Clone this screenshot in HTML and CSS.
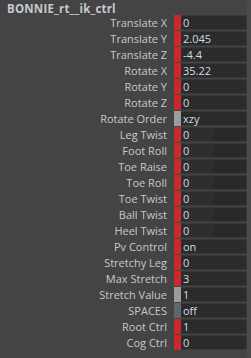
FILE: index.html
```html
<!DOCTYPE html>
<html>
<head>
<meta charset="utf-8">
<link rel="stylesheet" href="styles.css">
</head>
<body>
<div class="panel">
  <div class="main">
    <div class="title">BONNIE_rt__ik_ctrl</div>
    <div class="rows">
      <div class="row"><span class="label">Translate X</span><span class="mark red"></span><span class="field">0</span></div>
      <div class="row"><span class="label">Translate Y</span><span class="mark red"></span><span class="field">2.045</span></div>
      <div class="row"><span class="label">Translate Z</span><span class="mark red"></span><span class="field">-4.4</span></div>
      <div class="row"><span class="label">Rotate X</span><span class="mark red"></span><span class="field">35.22</span></div>
      <div class="row"><span class="label">Rotate Y</span><span class="mark red"></span><span class="field">0</span></div>
      <div class="row"><span class="label">Rotate Z</span><span class="mark red"></span><span class="field">0</span></div>
      <div class="row"><span class="label">Rotate Order</span><span class="mark gray"></span><span class="field plain">xzy</span></div>
      <div class="row"><span class="label">Leg Twist</span><span class="mark red"></span><span class="field split"><span class="num">0</span><span class="slide"></span></span></div>
      <div class="row"><span class="label">Foot Roll</span><span class="mark red"></span><span class="field split"><span class="num">0</span><span class="slide"></span></span></div>
      <div class="row"><span class="label">Toe Raise</span><span class="mark red"></span><span class="field split"><span class="num">0</span><span class="slide"></span></span></div>
      <div class="row"><span class="label">Toe Roll</span><span class="mark red"></span><span class="field split"><span class="num">0</span><span class="slide"></span></span></div>
      <div class="row"><span class="label">Toe Twist</span><span class="mark red"></span><span class="field split"><span class="num">0</span><span class="slide"></span></span></div>
      <div class="row"><span class="label">Ball Twist</span><span class="mark red"></span><span class="field split"><span class="num">0</span><span class="slide"></span></span></div>
      <div class="row"><span class="label">Heel Twist</span><span class="mark red"></span><span class="field split"><span class="num">0</span><span class="slide"></span></span></div>
      <div class="row"><span class="label">Pv Control</span><span class="mark red"></span><span class="field">on</span></div>
      <div class="row"><span class="label">Stretchy Leg</span><span class="mark red"></span><span class="field">0</span></div>
      <div class="row"><span class="label">Max Stretch</span><span class="mark red"></span><span class="field">3</span></div>
      <div class="row"><span class="label">Stretch Value</span><span class="mark gray"></span><span class="field">1</span></div>
      <div class="row"><span class="label">SPACES</span><span class="mark slate"></span><span class="field">off</span></div>
      <div class="row"><span class="label">Root Ctrl</span><span class="mark red"></span><span class="field">1</span></div>
      <div class="row"><span class="label">Cog Ctrl</span><span class="mark red"></span><span class="field">0</span></div>
    </div>
    <div class="section">SHAPES</div>
  </div>
  <div class="scrollbar"></div>
</div>
</body>
</html>
```

FILE: styles.css
```css
html, body {
  margin: 0;
  padding: 0;
  background: #444444;
  overflow: hidden;
}
body {
  width: 251px;
  height: 358px;
  font-family: "Open Sans", "DejaVu Sans", sans-serif;
  font-size: 11px;
  color: #c8c8c8;
}
.panel {
  display: flex;
  height: 358px;
}
.main {
  flex: 1;
  min-width: 0;
}
.scrollbar {
  width: 4px;
  background: #4a4a4a;
}
.title {
  font-weight: bold;
  font-size: 11.5px;
  letter-spacing: 0.2px;
  color: #c2cad2;
  padding: 3px 0 0 7px;
  height: 12px;
  line-height: 12px;
}
.rows {
  display: flex;
  flex-direction: column;
  gap: 1px;
}
.row {
  display: flex;
  height: 15px;
  align-items: stretch;
}
.label {
  width: 174px;
  text-align: right;
  line-height: 15px;
  padding-right: 7px;
  box-sizing: border-box;
  white-space: nowrap;
}
.mark {
  width: 7px;
}
.mark.red { background: #c9292b; }
.mark.gray { background: #9c9c9c; }
.mark.slate { background: #5e6670; }
.field {
  flex: 1;
  background: #2b2b2b;
  border: 1px solid #383838;
  border-left: none;
  border-radius: 0 2px 2px 0;
  color: #d3dae2;
  padding-left: 2px;
  line-height: 13px;
  display: flex;
}
.field.plain {
  background: #2a2a2a;
}
.field.split {
  padding-left: 0;
}
.num {
  width: 30px;
  padding-left: 2px;
  background: #2e2e2e;
}
.slide {
  flex: 1;
  background: #292929;
}
.section {
  margin-top: 7px;
  padding-left: 8px;
  color: #c8c8c8;
  font-weight: bold;
  line-height: 13px;
}
```
